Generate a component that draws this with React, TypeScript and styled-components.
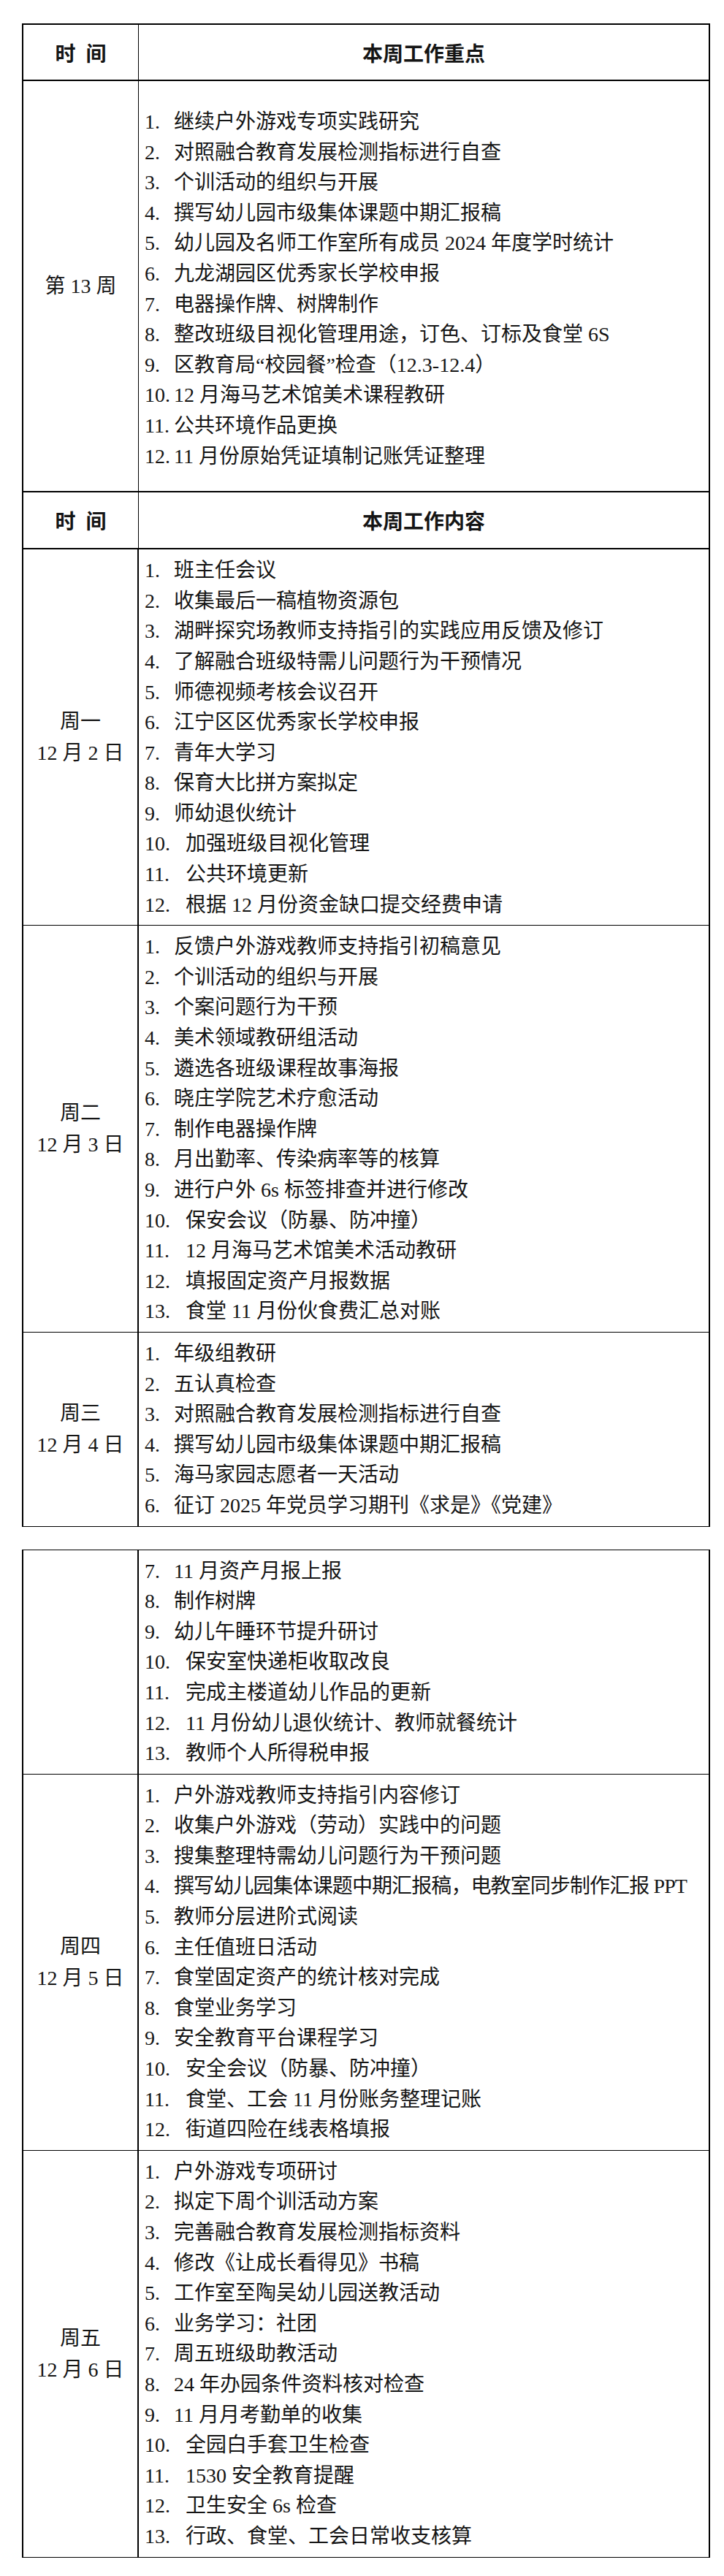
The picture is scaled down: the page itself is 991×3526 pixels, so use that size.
import React from 'react';
import styled, { createGlobalStyle } from 'styled-components';

const GlobalStyle = createGlobalStyle`
  html, body {
    margin: 0;
    padding: 0;
    background: #fff;
  }
  body {
    font-family: "Liberation Serif", "Noto Sans CJK SC", serif;
    color: #151515;
  }
`;

const Page = styled.div`
  width: 991px;
  padding: 32px 0 29px 30px;
  box-sizing: border-box;
`;

const Table = styled.div<{ $outer: number; $top?: number; $bottom?: number; $gap?: number }>`
  width: 942px;
  box-sizing: border-box;
  border-left: ${(p) => p.$outer}px solid #000;
  border-right: ${(p) => p.$outer}px solid #000;
  border-top: ${(p) => p.$top ?? 0}px solid #000;
  border-bottom: ${(p) => p.$bottom ?? 1}px solid #000;
  margin-top: ${(p) => p.$gap ?? 0}px;
`;

const Row = styled.div<{ $line?: number }>`
  display: grid;
  grid-template-columns: 158px minmax(0, 1fr);
  border-top: ${(p) => p.$line ?? 0}px solid #000;
`;

const HeaderRow = styled(Row)<{ $h: number }>`
  height: ${(p) => p.$h}px;
  border-bottom: 2px solid #000;
`;

const LabelCell = styled.div<{ $sep: number }>`
  display: flex;
  flex-direction: column;
  align-items: center;
  justify-content: center;
  border-right: ${(p) => p.$sep}px solid #000;
  font-size: 28px;
  line-height: 43px;
  white-space: pre;
`;

const HeadText = styled.div`
  display: flex;
  align-items: center;
  justify-content: center;
  font-size: 28px;
  font-weight: 700;
  white-space: pre;
`;

const HeadLabel = styled(HeadText)<{ $sep: number }>`
  border-right: ${(p) => p.$sep}px solid #000;
`;

const ItemList = styled.ol<{ $pt: number; $pb: number }>`
  list-style: none;
  margin: 0;
  padding: ${(p) => p.$pt}px 0 ${(p) => p.$pb}px 8px;
  overflow: hidden;
`;

const Item = styled.li<{ $tight?: boolean }>`
  display: flex;
  font-size: 28px;
  line-height: 41.6px;
  white-space: nowrap;
  letter-spacing: ${(p) => (p.$tight ? '-0.9px' : 'normal')};
`;

const Num = styled.span<{ $w: number }>`
  flex: none;
  width: ${(p) => p.$w}px;
  letter-spacing: normal;
`;

type Day = {
  label?: string[];
  start?: number;
  items: string[];
};

const focus = [
  '继续户外游戏专项实践研究',
  '对照融合教育发展检测指标进行自查',
  '个训活动的组织与开展',
  '撰写幼儿园市级集体课题中期汇报稿',
  '幼儿园及名师工作室所有成员 2024 年度学时统计',
  '九龙湖园区优秀家长学校申报',
  '电器操作牌、树牌制作',
  '整改班级目视化管理用途，订色、订标及食堂 6S',
  '区教育局“校园餐”检查（12.3-12.4）',
  '12 月海马艺术馆美术课程教研',
  '公共环境作品更换',
  '11 月份原始凭证填制记账凭证整理',
];

const firstPage: Day[] = [
  {
    label: ['周一', '12 月 2 日'],
    items: [
      '班主任会议',
      '收集最后一稿植物资源包',
      '湖畔探究场教师支持指引的实践应用反馈及修订',
      '了解融合班级特需儿问题行为干预情况',
      '师德视频考核会议召开',
      '江宁区区优秀家长学校申报',
      '青年大学习',
      '保育大比拼方案拟定',
      '师幼退伙统计',
      '加强班级目视化管理',
      '公共环境更新',
      '根据 12 月份资金缺口提交经费申请',
    ],
  },
  {
    label: ['周二', '12 月 3 日'],
    items: [
      '反馈户外游戏教师支持指引初稿意见',
      '个训活动的组织与开展',
      '个案问题行为干预',
      '美术领域教研组活动',
      '遴选各班级课程故事海报',
      '晓庄学院艺术疗愈活动',
      '制作电器操作牌',
      '月出勤率、传染病率等的核算',
      '进行户外 6s 标签排查并进行修改',
      '保安会议（防暴、防冲撞）',
      '12 月海马艺术馆美术活动教研',
      '填报固定资产月报数据',
      '食堂 11 月份伙食费汇总对账',
    ],
  },
  {
    label: ['周三', '12 月 4 日'],
    items: [
      '年级组教研',
      '五认真检查',
      '对照融合教育发展检测指标进行自查',
      '撰写幼儿园市级集体课题中期汇报稿',
      '海马家园志愿者一天活动',
      '征订 2025 年党员学习期刊《求是》《党建》',
    ],
  },
];

const secondPage: Day[] = [
  {
    start: 7,
    items: [
      '11 月资产月报上报',
      '制作树牌',
      '幼儿午睡环节提升研讨',
      '保安室快递柜收取改良',
      '完成主楼道幼儿作品的更新',
      '11 月份幼儿退伙统计、教师就餐统计',
      '教师个人所得税申报',
    ],
  },
  {
    label: ['周四', '12 月 5 日'],
    items: [
      '户外游戏教师支持指引内容修订',
      '收集户外游戏（劳动）实践中的问题',
      '搜集整理特需幼儿问题行为干预问题',
      '撰写幼儿园集体课题中期汇报稿，电教室同步制作汇报 PPT',
      '教师分层进阶式阅读',
      '主任值班日活动',
      '食堂固定资产的统计核对完成',
      '食堂业务学习',
      '安全教育平台课程学习',
      '安全会议（防暴、防冲撞）',
      '食堂、工会 11 月份账务整理记账',
      '街道四险在线表格填报',
    ],
  },
  {
    label: ['周五', '12 月 6 日'],
    items: [
      '户外游戏专项研讨',
      '拟定下周个训活动方案',
      '完善融合教育发展检测指标资料',
      '修改《让成长看得见》书稿',
      '工作室至陶吴幼儿园送教活动',
      '业务学习：社团',
      '周五班级助教活动',
      '24 年办园条件资料核对检查',
      '11 月月考勤单的收集',
      '全园白手套卫生检查',
      '1530 安全教育提醒',
      '卫生安全 6s 检查',
      '行政、食堂、工会日常收支核算',
    ],
  },
];

const DayRow = ({ day, first }: { day: Day; first: boolean }) => {
  const start = day.start ?? 1;
  return (
    <Row $line={first ? 0 : 1}>
      <LabelCell $sep={2}>
        {day.label?.map((l) => (
          <div key={l}>{l}</div>
        ))}
      </LabelCell>
      <ItemList $pt={8} $pb={7}>
        {day.items.map((t, i) => {
          const n = start + i;
          return (
            <Item key={n} $tight={t.length > 26}>
              <Num $w={n >= 10 ? 56 : 40}>{n}.</Num>
              {t}
            </Item>
          );
        })}
      </ItemList>
    </Row>
  );
};

export default function App() {
  return (
    <>
      <GlobalStyle />
      <Page>
        <Table $outer={2} $top={2} $bottom={2}>
          <HeaderRow $h={75}>
            <HeadLabel $sep={1}>{'时  间'}</HeadLabel>
            <HeadText>本周工作重点</HeadText>
          </HeaderRow>
          <Row>
            <LabelCell $sep={1}>
              <div>第 13 周</div>
            </LabelCell>
            <ItemList $pt={35} $pb={27}>
              {focus.map((t, i) => (
                <Item key={i}>
                  <Num $w={40}>{i + 1}.</Num>
                  {t}
                </Item>
              ))}
            </ItemList>
          </Row>
        </Table>

        <Table $outer={2} $bottom={1}>
          <HeaderRow $h={76}>
            <HeadLabel $sep={1}>{'时  间'}</HeadLabel>
            <HeadText>本周工作内容</HeadText>
          </HeaderRow>
          {firstPage.map((d, i) => (
            <DayRow key={i} day={d} first={i === 0} />
          ))}
        </Table>

        <Table $outer={2} $top={1} $bottom={1} $gap={31}>
          {secondPage.map((d, i) => (
            <DayRow key={i} day={d} first={i === 0} />
          ))}
        </Table>
      </Page>
    </>
  );
}
